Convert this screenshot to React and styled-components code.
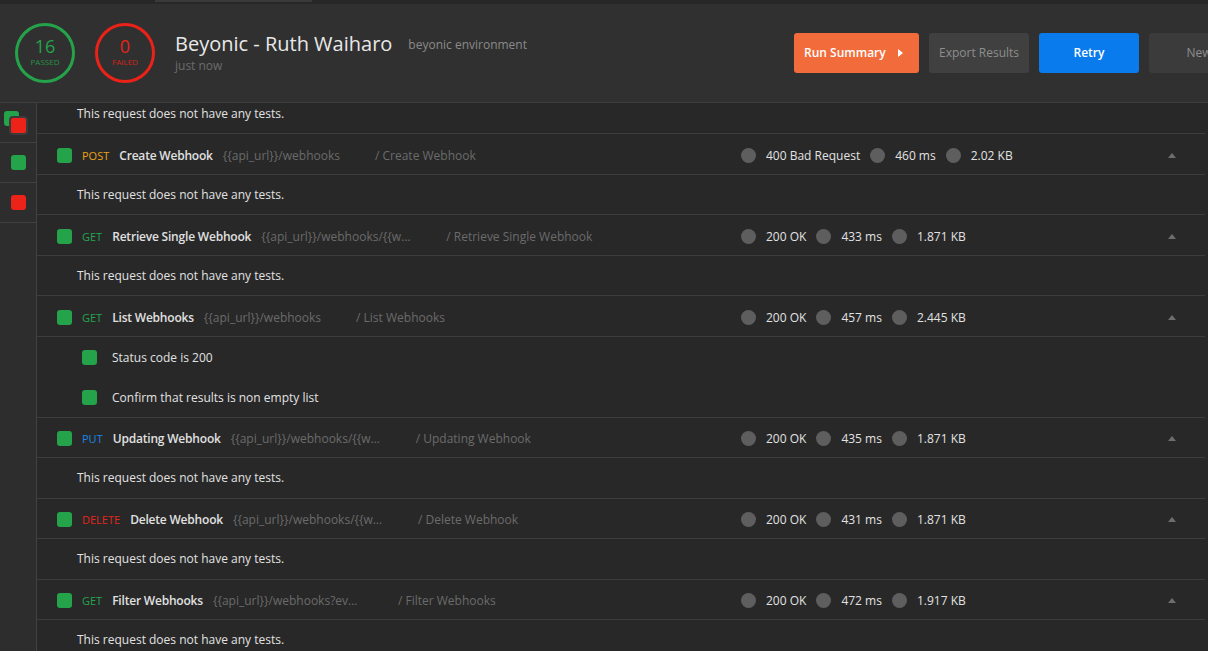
import React from "react";
import styled, { createGlobalStyle } from "styled-components";

const GlobalStyle = createGlobalStyle`
  html, body {
    margin: 0;
    height: 100%;
    overflow: hidden;
    background: #282828;
    font-family: "Open Sans", "Noto Sans", sans-serif;
  }
  #root { height: 100%; }
  * { box-sizing: border-box; }
`;

const Page = styled.div`
  height: 100vh;
  display: flex;
  flex-direction: column;
  overflow: hidden;
`;

const TopStrip = styled.div`
  height: 4px;
  background: #272727;
  flex-shrink: 0;
`;

const TabMark = styled.div`
  margin-left: 155px;
  width: 157px;
  height: 2px;
  background: #3a3a3a;
`;

const Header = styled.div`
  height: 99px;
  flex-shrink: 0;
  display: flex;
  align-items: center;
  padding-left: 15px;
  background: #303030;
  border-bottom: 1px solid #3e3e3e;
  overflow: hidden;
`;

const Counter = styled.div`
  width: 60px;
  height: 60px;
  border-radius: 50%;
  border: 3px solid ${({ $color }) => $color};
  color: ${({ $color }) => $color};
  display: flex;
  flex-direction: column;
  align-items: center;
  justify-content: center;
  margin-right: 20px;
  flex-shrink: 0;
`;

const CountValue = styled.div`
  font-size: 18px;
  line-height: 20px;
  margin-top: -2px;
`;

const CountLabel = styled.div`
  font-size: 8px;
  line-height: 12px;
  text-transform: uppercase;
  opacity: 0.85;
`;

const TitleBlock = styled.div`
  flex: 1;
  min-width: 0;
  display: flex;
  flex-direction: column;
  margin-top: -2px;
`;

const TitleLine = styled.div`
  display: flex;
  align-items: baseline;
  gap: 16px;
`;

const Title = styled.div`
  font-size: 20px;
  color: #e8e8e8;
  white-space: nowrap;
`;

const EnvName = styled.div`
  font-size: 12px;
  color: #8a8a8a;
  white-space: nowrap;
  position: relative;
  top: -2px;
`;

const Time = styled.div`
  font-size: 12px;
  color: #6c6c6c;
`;

const Actions = styled.div`
  display: flex;
  gap: 10px;
  flex-shrink: 0;
  margin-right: -41px;
  margin-top: -1px;
`;

const Button = styled.div`
  width: ${({ $w }) => $w || 100}px;
  height: 40px;
  border-radius: 3px;
  display: flex;
  align-items: center;
  justify-content: ${({ $left }) => ($left ? "space-between" : "center")};
  padding: 0 ${({ $left }) => ($left ? "16px 0 10px" : "0")};
  background: ${({ $bg }) => $bg};
  color: ${({ $fg }) => $fg};
  font-size: 12px;
  font-weight: ${({ $bold }) => ($bold ? 600 : 400)};
  white-space: nowrap;
`;

const PlayArrow = styled.span`
  width: 0;
  height: 0;
  border-top: 4px solid transparent;
  border-bottom: 4px solid transparent;
  border-left: 5px solid #ffffff;
`;

const Body = styled.div`
  flex: 1;
  min-height: 0;
  display: flex;
`;

const Sidebar = styled.div`
  width: 37px;
  flex-shrink: 0;
  background: #2d2d2d;
  border-right: 1px solid #414141;
`;

const SideItem = styled.div`
  height: 40px;
  border-bottom: 1px solid #404040;
  display: flex;
  align-items: center;
  justify-content: center;
`;

const StackedIcon = styled.div`
  width: 24px;
  height: 24px;
  position: relative;
  margin-right: 4px;
`;

const Square = styled.div`
  width: 15px;
  height: 15px;
  border-radius: 3px;
  background: ${({ $fail }) => ($fail ? "#ed2218" : "#25a34b")};
  flex-shrink: 0;
`;

const StackTop = styled(Square)`
  position: absolute;
  left: 5px;
  top: 5px;
  width: 19px;
  height: 19px;
  border: 2px solid #3b3b3b;
  border-radius: 4px;
`;

const StackBack = styled(Square)`
  position: absolute;
  left: 0;
  top: 0;
`;

const Main = styled.div`
  flex: 1;
  min-width: 0;
  overflow: hidden;
  padding-right: 3px;
`;

const List = styled.div`
  margin-top: -9.5px;
`;

const Row = styled.div`
  height: 40.5px;
  display: flex;
  align-items: center;
  border-bottom: ${({ $noBorder }) => ($noBorder ? "none" : "1px solid #3d3d3d")};
  font-size: 12px;
  color: #e2e2e2;
`;

const RequestRow = styled(Row)`
  padding: 3px 29px 0 20px;
`;

const Left = styled.div`
  flex: 1;
  min-width: 0;
  display: flex;
  align-items: center;
  gap: 10px;
  white-space: nowrap;
`;

const Method = styled.span`
  font-size: 11px;
  color: ${({ $method }) =>
    ({
      GET: "#26a550",
      POST: "#e8a317",
      PUT: "#1a86e6",
      DELETE: "#e3261d",
    }[$method])};
`;

const Name = styled.span`
  color: #e0e0e0;
  font-weight: 600;
  letter-spacing: -0.2px;
`;

const Url = styled.span`
  max-width: 150px;
  overflow: hidden;
  text-overflow: ellipsis;
  color: #6b6b6b;
  margin-right: 25px;
`;

const Path = styled.span`
  color: #6b6b6b;
`;

const Stats = styled.div`
  width: 427px;
  flex-shrink: 0;
  display: flex;
  align-items: center;
`;

const Stat = styled.div`
  display: flex;
  align-items: center;
  gap: 10px;
  margin-right: 10px;
  color: #e2e2e2;
`;

const Dot = styled.span`
  width: 15px;
  height: 15px;
  border-radius: 50%;
  background: #5e5e5e;
`;

const Caret = styled.span`
  width: 0;
  height: 0;
  border-left: 4px solid transparent;
  border-right: 4px solid transparent;
  border-bottom: 5px solid #6e6e6e;
`;

const NoTests = styled(Row)`
  padding-left: 40px;
`;

const TestRow = styled(Row)`
  padding: 2px 0 0 45px;
  gap: 15px;
`;

const requests = [
  { method: "POST", name: "Create Webhook", url: "{{api_url}}/webhooks", status: "400 Bad Request", time: "460 ms", size: "2.02 KB" },
  { method: "GET", name: "Retrieve Single Webhook", url: "{{api_url}}/webhooks/{{webhook_id}}", status: "200 OK", time: "433 ms", size: "1.871 KB" },
  { method: "GET", name: "List Webhooks", url: "{{api_url}}/webhooks", status: "200 OK", time: "457 ms", size: "2.445 KB", tests: ["Status code is 200", "Confirm that results is non empty list"] },
  { method: "PUT", name: "Updating Webhook", url: "{{api_url}}/webhooks/{{webhook_id}}", status: "200 OK", time: "435 ms", size: "1.871 KB" },
  { method: "DELETE", name: "Delete Webhook", url: "{{api_url}}/webhooks/{{webhook_id}}", status: "200 OK", time: "431 ms", size: "1.871 KB" },
  { method: "GET", name: "Filter Webhooks", url: "{{api_url}}/webhooks?event=collection.received", status: "200 OK", time: "472 ms", size: "1.917 KB" },
];

const RequestBlock = ({ req }) => (
  <>
    <RequestRow>
      <Left>
        <Square />
        <Method $method={req.method}>{req.method}</Method>
        <Name>{req.name}</Name>
        <Url>{req.url}</Url>
        <Path>/ {req.name}</Path>
      </Left>
      <Stats>
        <Stat><Dot />{req.status}</Stat>
        <Stat><Dot />{req.time}</Stat>
        <Stat><Dot />{req.size}</Stat>
      </Stats>
      <Caret />
    </RequestRow>
    {req.tests ? (
      req.tests.map((t, i) => (
        <TestRow key={t} $noBorder={i < req.tests.length - 1}>
          <Square />
          {t}
        </TestRow>
      ))
    ) : (
      <NoTests>This request does not have any tests.</NoTests>
    )}
  </>
);

export default function App() {
  return (
    <Page>
      <GlobalStyle />
      <TopStrip>
        <TabMark />
      </TopStrip>
      <Header>
        <Counter $color="#25a34b">
          <CountValue>16</CountValue>
          <CountLabel>Passed</CountLabel>
        </Counter>
        <Counter $color="#ea2218">
          <CountValue>0</CountValue>
          <CountLabel>Failed</CountLabel>
        </Counter>
        <TitleBlock>
          <TitleLine>
            <Title>Beyonic - Ruth Waiharo</Title>
            <EnvName>beyonic environment</EnvName>
          </TitleLine>
          <Time>just now</Time>
        </TitleBlock>
        <Actions>
          <Button $w={125} $left $bold $bg="#f26b3a" $fg="#ffffff">
            Run Summary
            <PlayArrow />
          </Button>
          <Button $bg="#404040" $fg="#8e8e8e">Export Results</Button>
          <Button $bold $bg="#097bed" $fg="#ffffff">Retry</Button>
          <Button $bg="#3b3b3b" $fg="#8e8e8e">New</Button>
        </Actions>
      </Header>
      <Body>
        <Sidebar>
          <SideItem>
            <StackedIcon>
              <StackBack />
              <StackTop $fail />
            </StackedIcon>
          </SideItem>
          <SideItem>
            <Square />
          </SideItem>
          <SideItem>
            <Square $fail />
          </SideItem>
        </Sidebar>
        <Main>
          <List>
            <NoTests>This request does not have any tests.</NoTests>
            {requests.map((r) => (
              <RequestBlock key={r.name} req={r} />
            ))}
          </List>
        </Main>
      </Body>
    </Page>
  );
}
